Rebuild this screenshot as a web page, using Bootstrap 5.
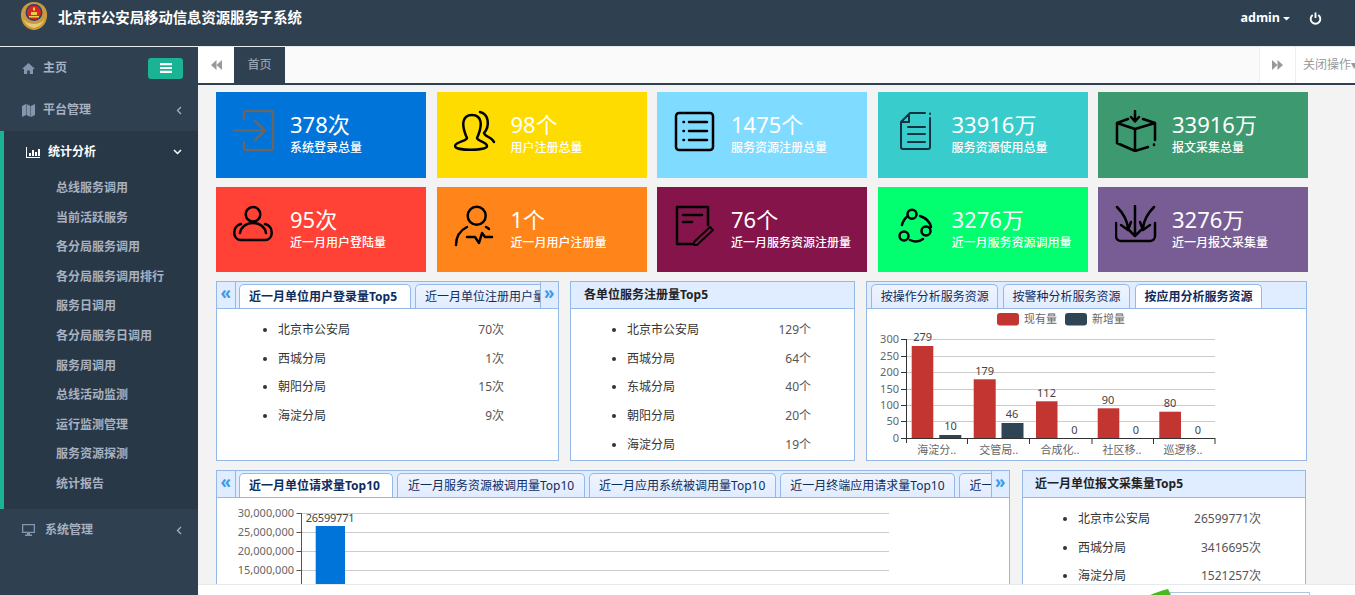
<!DOCTYPE html>
<html lang="zh">
<head>
<meta charset="utf-8">
<title>北京市公安局移动信息资源服务子系统</title>
<link href="https://cdn.jsdelivr.net/npm/bootstrap@5.3.0/dist/css/bootstrap.min.css" rel="stylesheet">
<style>
html,body{height:100%;overflow:hidden}
body{font-family:"Noto Sans","Noto Sans CJK SC",sans-serif;font-size:12px;background:#f3f3f4;color:#333}
.top-bar{height:47px;background:#2f4050;border-bottom:1px solid #e7eaec;color:#fff;flex:none;padding-bottom:10px}
.top-title{font-size:14.35px;font-weight:700;margin-left:10px}
.logo-svg{margin-left:20px;margin-top:-4px}
.admin-txt{font-size:12.5px;font-weight:700;line-height:1;margin-top:1px}
.caret-svg{margin-left:3px}
.power-svg{margin-left:18px;margin-right:33px}
.side-bar{width:198px;flex:none;background:#2f4050;color:#a7b1c2;font-weight:600}
.side-item{height:42px;position:relative}
.side-home{padding-left:22px}
.side-label{margin-left:8px}
.side-label-wide{margin-left:10px}
.menu-btn{width:35px;height:21px;background:#1ab394;border-radius:3px;margin-left:auto;margin-right:15px}
.side-active{background:#293846;border-left:4px solid #1ab394;height:378px}
.side-active .side-item{color:#fff;padding-left:22px}
.side-sub{padding-left:52px}
.side-sub div{height:29.6px;line-height:29.6px}
.side-arrow{margin-left:auto;margin-right:16px}
.main-col{min-width:0}
.split-area{min-height:0}
.tab-bar{height:38px;flex:none;background:#fafafa;border-bottom:2px solid #2f4050;color:#999}
.tab-btn{width:36px;background:#fff;flex:none}
.tab-home{width:51px;background:#2f4050;color:#a7b1c2;flex:none}
.tab-right{width:36px;background:#fff;border-left:1px solid #eee;flex:none}
.tab-close{width:60px;padding-left:7px;background:#fff;border-left:1px solid #eee;white-space:nowrap;overflow:hidden;flex:none}
.content-area{min-height:0;overflow:hidden;padding:7px 0 0 18px}
.tile-grid{display:grid;grid-template-columns:repeat(5,210px);column-gap:10.5px;row-gap:9px;grid-template-rows:86px 85px}
.tile{padding:18px 0 0 17px;color:#fff;gap:15px}
.tile svg{flex:none;fill:none;stroke:#000;stroke-width:2.5;stroke-linecap:round;stroke-linejoin:round}
.tile svg.ic-gray{stroke:#666}
.tile svg.ic-doc{stroke:#12333f;stroke-width:2}
.tile-num{font-size:22px;line-height:29px}
.tile-sub{font-size:12px;line-height:15px;font-weight:500;margin-top:1px}
.c1{background:#0074d9}.c2{background:#ffdc00}.c3{background:#7fdbff}.c4{background:#39cccc}.c5{background:#3d9970}
.c6{background:#ff4136}.c7{background:#ff851b}.c8{background:#85144b}.c9{background:#01ff70}.c10{background:#775d94}
.pn-row{margin-top:9px;gap:11px;height:180px}
.pn-row2{margin-top:9px;gap:12px;height:200px}
.pn{border:1px solid #95b8e7;background:#fff;overflow:hidden;flex:none}
.w1{width:343px}.w2{width:285px}.w3{width:441px}.w4{width:794px}.w5{width:284px}
.pn-head{height:26px;background:#e0ecff;border-bottom:1px solid #95b8e7;box-sizing:content-box;position:relative}
.pn-title{font-weight:700;color:#222;padding-left:13px;line-height:26px}
.pn-title5{padding-left:12px}
.scroller{width:18.5px;flex:none;background:#e0ecff;color:#3d9be9;font-size:17px;line-height:21px;text-align:center;height:26px;font-weight:700}
.scroller-l{border-right:1px solid #95b8e7}
.scroller-r{border-left:1px solid #95b8e7}
.tab-strip{min-width:0;overflow:hidden;gap:4px;padding:2px 0 0 3px}
.tab-strip-plain{padding-left:4px;gap:4.5px}
.easy-tab{height:24px;line-height:23px;padding:0 9.5px;border:1px solid #95b8e7;border-bottom:0;border-radius:5px 5px 0 0;background:linear-gradient(#eff5ff,#e0ecff);color:#0e2d5f;white-space:nowrap;flex:none}
.easy-tab-on{background:#fff;font-weight:700;height:25px;position:relative;z-index:1;padding:0 12.5px 0 9.5px}
.w3 .easy-tab{padding:0 8.7px}
.rank-list{margin:0;padding:7px 54px 0 61px;line-height:28.7px;color:#333}
.rank-list span:last-child{color:#555}
.rank-two{padding:7px 43px 0 56px}
.rank-five{padding:7px 44px 0 55px}
.foot-bar{height:11px;flex:none;background:#fff;border-top:1px solid #e7eaec;overflow:hidden;padding-right:45px}
.foot-box{width:140px;height:20px;margin-top:7px;border:1px solid #b0c4de;background:#fff}
.foot-mark{margin-top:4px}
.chart-svg{display:block}
.chart-svg text{font-family:"Noto Sans","Noto Sans CJK SC",sans-serif;font-size:11px;fill:#666}
.chart-svg .val{fill:#444;text-anchor:middle}
.chart-svg .axl{text-anchor:end}
.chart-svg .cat{text-anchor:middle}
.chart-svg .tight{letter-spacing:-.2px}
</style>
</head>
<body class="d-flex flex-column">
<header class="top-bar d-flex align-items-center">
  <svg class="logo-svg" width="28" height="30" viewBox="0 0 28 30">
    <path d="M14 1C5 1 0 8 1 16c1 8 7 13 13 13s12-5 13-13C28 8 23 1 14 1z" fill="#c99a3c"/>
    <path d="M3 17c2 6 6 9 11 10 5-1 9-4 11-10-1 3-6 6-11 6S4 20 3 17z" fill="#e8c976"/>
    <circle cx="14" cy="11.500" r="8.500" fill="#2a3f78"/>
    <circle cx="14" cy="11.500" r="7" fill="#d62a20"/>
    <path d="M9 15h10v1.500H9zM11 11h6v3h-6zM13 6.500h2v3h-2z" fill="#f3c94e"/>
  </svg>
  <span class="top-title">北京市公安局移动信息资源服务子系统</span>
  <span class="admin-txt ms-auto">admin</span>
  <svg class="caret-svg" width="8" height="5" viewBox="0 0 8 5"><path d="M0 1h7L3.500 4.500z" fill="#fff"/></svg>
  <svg class="power-svg" width="13" height="13" viewBox="0 0 14 14" fill="none" stroke="#fff" stroke-width="2"><path d="M4 3.200a5.200 5.200 0 1 0 6 0"/><path d="M7 .500v6"/></svg>
</header>
<div class="split-area d-flex flex-grow-1">
  <aside class="side-bar">
    <div class="side-item side-home d-flex align-items-center">
      <svg width="13" height="11" viewBox="0 0 13 11"><path d="M6.500 0L0 6h2v5h3.200V7.500h2.600V11H11V6h2z" fill="#8496ad"/></svg>
      <span class="side-label">主页</span>
      <span class="menu-btn d-flex flex-column align-items-center justify-content-center"><svg width="12" height="10" viewBox="0 0 12 10"><path d="M0 0h12v2.200H0zM0 3.900h12v2.200H0zM0 7.800h12V10H0z" fill="#fff"/></svg></span>
    </div>
    <div class="side-item side-home d-flex align-items-center">
      <svg width="13" height="13" viewBox="0 0 13 13"><path d="M0 2l4-2v11l-4 2zM4.500 0l4 2v11l-4-2zM9 2l4-2v11l-4 2z" fill="#8496ad"/></svg>
      <span class="side-label">平台管理</span>
      <svg class="side-arrow" width="6" height="9" viewBox="0 0 6 9" fill="none" stroke="#a7b1c2" stroke-width="1.300"><path d="M5 1L1.500 4.500 5 8"/></svg>
    </div>
    <div class="side-active">
      <div class="side-item d-flex align-items-center">
        <svg width="14" height="11" viewBox="0 0 14 11"><path d="M0 0h1v10h13v1H0zM3 6h2v3H3zM6 3h2v6H6zM9 5h2v4H9zM12 2h2v7h-2z" fill="#fff"/></svg>
        <span class="side-label fw-bold">统计分析</span>
        <svg class="side-arrow" width="9" height="6" viewBox="0 0 9 6" fill="none" stroke="#fff" stroke-width="1.500"><path d="M1 1l3.500 3.500L8 1"/></svg>
      </div>
      <div class="side-sub">
        <div>总线服务调用</div><div>当前活跃服务</div><div>各分局服务调用</div><div>各分局服务调用排行</div><div>服务日调用</div><div>各分局服务日调用</div><div>服务周调用</div><div>总线活动监测</div><div>运行监测管理</div><div>服务资源探测</div><div>统计报告</div>
      </div>
    </div>
    <div class="side-item side-home d-flex align-items-center">
      <svg width="13" height="12" viewBox="0 0 13 12"><path d="M0 0h13v9H8v1.500h2V12H3v-1.500h2V9H0zM1.300 1.300v6.400h10.400V1.300z" fill="#8496ad"/></svg>
      <span class="side-label side-label-wide">系统管理</span>
      <svg class="side-arrow" width="6" height="9" viewBox="0 0 6 9" fill="none" stroke="#a7b1c2" stroke-width="1.300"><path d="M5 1L1.500 4.500 5 8"/></svg>
    </div>
  </aside>
  <main class="main-col flex-grow-1 d-flex flex-column">
    <div class="tab-bar d-flex">
      <div class="tab-btn d-flex align-items-center justify-content-center"><svg width="11" height="10" viewBox="0 0 11 10"><path d="M5.500 0v10L0 5zM11 0v10L5.500 5z" fill="#999"/></svg></div>
      <div class="tab-home d-flex align-items-center justify-content-center">首页</div>
      <div class="flex-grow-1"></div>
      <div class="tab-right d-flex align-items-center justify-content-center"><svg width="11" height="10" viewBox="0 0 11 10"><path d="M0 0v10l5.500-5zM5.500 0v10L11 5z" fill="#999"/></svg></div>
      <div class="tab-close d-flex align-items-center">关闭操作▾</div>
    </div>
    <div class="content-area flex-grow-1">
      <div class="tile-grid">
        <div class="tile c1 d-flex">
          <svg class="ic-gray" width="42" height="42" viewBox="0 0 42 42"><path d="M11 9V3a2 2 0 0 1 2-2h25a2 2 0 0 1 2 2v35a2 2 0 0 1-2 2H13a2 2 0 0 1-2-2v-6"/><path d="M1 20.500h31M22 11l10 9.500L22 30"/></svg>
          <div><div class="tile-num">378次</div><div class="tile-sub">系统登录总量</div></div>
        </div>
        <div class="tile c2 d-flex">
          <svg width="42" height="42" viewBox="0 0 42 42"><path d="M13 28C7 15 8 5 18 5c10 0 11 10 5 23 0 3 10 4 10 8 0 5-32 5-32 0 0-4 12-5 12-8z"/><path d="M26 2c9 2 10 14 4 21 1 4 8 4 10 9"/></svg>
          <div><div class="tile-num">98个</div><div class="tile-sub">用户注册总量</div></div>
        </div>
        <div class="tile c3 d-flex">
          <svg width="42" height="42" viewBox="0 0 42 42"><rect x="2" y="3" width="37" height="37" rx="3"/><path d="M15 12h18M15 21h18M15 30h18M9.500 12h.5M9.500 21h.5M9.500 30h.5"/></svg>
          <div><div class="tile-num">1475个</div><div class="tile-sub">服务资源注册总量</div></div>
        </div>
        <div class="tile c4 d-flex">
          <svg class="ic-doc" width="42" height="42" viewBox="0 0 42 42"><path d="M6 12l9-9h15M35 8v29a2 2 0 0 1-2 2H8a2 2 0 0 1-2-2V12M14 4v8H6M35 3.500v.5M13 17h17M13 24h17M13 32h17"/></svg>
          <div><div class="tile-num">33916万</div><div class="tile-sub">服务资源使用总量</div></div>
        </div>
        <div class="tile c5 d-flex">
          <svg width="42" height="42" viewBox="0 0 42 42"><path d="M20 1v10M16 7l4 4.500L24 7M13 9L2 13v20l18 8 13-4M28 9l12 4v17M2 13l18 6 20-6M20 19v22M39 34.500v.5"/></svg>
          <div><div class="tile-num">33916万</div><div class="tile-sub">报文采集总量</div></div>
        </div>
        <div class="tile c6 d-flex">
          <svg width="42" height="42" viewBox="0 0 42 42"><circle cx="20" cy="9.300" r="7.300"/><path d="M7 28c1-6 6-10 13-10s12 4 13 10M8 19c-9 2-9 16 0 16h24c9 0 9-14 0-16"/></svg>
          <div><div class="tile-num">95次</div><div class="tile-sub">近一月用户登陆量</div></div>
        </div>
        <div class="tile c7 d-flex">
          <svg width="42" height="42" viewBox="0 0 42 42"><circle cx="22.700" cy="10.700" r="9"/><path d="M2 40c0-9 5-15 11-18M32 22c1 .5 2 1 3 2M13 32h8l4 6 3-10 3 4h7"/></svg>
          <div><div class="tile-num">1个</div><div class="tile-sub">近一月用户注册量</div></div>
        </div>
        <div class="tile c8 d-flex">
          <svg width="42" height="42" viewBox="0 0 42 42"><path d="M34 20V2H3v37h15M9 10h19M9 17h9"/><path d="M20 37l16-15 3 3-16 15h-3z" stroke-width="1.800"/></svg>
          <div><div class="tile-num">76个</div><div class="tile-sub">近一月服务资源注册量</div></div>
        </div>
        <div class="tile c9 d-flex">
          <svg width="42" height="42" viewBox="0 0 42 42"><circle cx="17" cy="9.300" r="4.500"/><circle cx="31" cy="26" r="4.500"/><circle cx="9" cy="31" r="4.500"/><path d="M7 20c1-4 3-7 6-9M25 11c6 2 10 6 11 11M15 35c4 2 9 2 13-1"/></svg>
          <div><div class="tile-num">3276万</div><div class="tile-sub">近一月服务资源调用量</div></div>
        </div>
        <div class="tile c10 d-flex">
          <svg width="42" height="42" viewBox="0 0 42 42"><path d="M1 18v13a5 5 0 0 0 5 5h29a5 5 0 0 0 5-5V18M20 1v29M14 25l6 6 6-6M2 2c5 5 10 12 11 21M6 20l7 5 3-8M39 2c-5 5-10 12-11 21M35 20l-7 5-3-8"/></svg>
          <div><div class="tile-num">3276万</div><div class="tile-sub">近一月报文采集量</div></div>
        </div>
      </div>

      <div class="pn-row d-flex">
        <section class="pn w1">
          <div class="pn-head d-flex">
            <div class="scroller scroller-l">«</div>
            <div class="tab-strip flex-grow-1 d-flex">
              <div class="easy-tab easy-tab-on">近一月单位用户登录量Top5</div>
              <div class="easy-tab">近一月单位注册用户量Top5</div>
            </div>
            <div class="scroller scroller-r">»</div>
          </div>
          <ul class="rank-list">
            <li><div class="d-flex justify-content-between"><span>北京市公安局</span><span>70次</span></div></li>
            <li><div class="d-flex justify-content-between"><span>西城分局</span><span>1次</span></div></li>
            <li><div class="d-flex justify-content-between"><span>朝阳分局</span><span>15次</span></div></li>
            <li><div class="d-flex justify-content-between"><span>海淀分局</span><span>9次</span></div></li>
          </ul>
        </section>
        <section class="pn w2">
          <div class="pn-head"><div class="pn-title">各单位服务注册量Top5</div></div>
          <ul class="rank-list rank-two">
            <li><div class="d-flex justify-content-between"><span>北京市公安局</span><span>129个</span></div></li>
            <li><div class="d-flex justify-content-between"><span>西城分局</span><span>64个</span></div></li>
            <li><div class="d-flex justify-content-between"><span>东城分局</span><span>40个</span></div></li>
            <li><div class="d-flex justify-content-between"><span>朝阳分局</span><span>20个</span></div></li>
            <li><div class="d-flex justify-content-between"><span>海淀分局</span><span>19个</span></div></li>
          </ul>
        </section>
        <section class="pn w3">
          <div class="pn-head d-flex">
            <div class="tab-strip tab-strip-plain flex-grow-1 d-flex">
              <div class="easy-tab">按操作分析服务资源</div>
              <div class="easy-tab">按警种分析服务资源</div>
              <div class="easy-tab easy-tab-on">按应用分析服务资源</div>
            </div>
          </div>
          <svg class="chart-svg" width="439" height="152" viewBox="867 308 439 152">
            <rect x="997" y="312" width="22" height="12.500" rx="3" fill="#c23531"/>
            <text x="1024" y="322">现有量</text>
            <rect x="1065" y="312" width="22" height="12.500" rx="3" fill="#2f4554"/>
            <text x="1092" y="322">新增量</text>
            <path d="M906 338.500H1215M906 355.500H1215M906 371.500H1215M906 388.500H1215M906 404.500H1215M906 420.500H1215" stroke="#ccc"/>
            <g fill="#c23531">
              <rect x="911.700" y="345" width="21.600" height="92.700"/>
              <rect x="973.700" y="378.300" width="22" height="59.400"/>
              <rect x="1036" y="400.300" width="21.500" height="37.400"/>
              <rect x="1097.700" y="407.300" width="21.600" height="30.400"/>
              <rect x="1159.300" y="410.700" width="21.700" height="27"/>
            </g>
            <g fill="#2f4554">
              <rect x="939.300" y="434" width="22" height="3.700"/>
              <rect x="1001.500" y="422" width="22" height="15.700"/>
            </g>
            <path d="M906.500 338v104M901 338.500h5M901 355.500h5M901 371.500h5M901 388.500h5M901 404.500h5M901 420.500h5M901 437.500H1215.500M967.500 438v5M1029.500 438v5M1092 438v5M1153.500 438v5M1215 438v5" stroke="#333" fill="none"/>
            <text class="axl" x="899" y="342">300</text><text class="axl" x="899" y="359">250</text><text class="axl" x="899" y="375">200</text><text class="axl" x="899" y="392">150</text><text class="axl" x="899" y="408">100</text><text class="axl" x="899" y="424">50</text><text class="axl" x="899" y="441">0</text>
            <text class="val" x="922.700" y="340">279</text><text class="val" x="950.500" y="429">10</text>
            <text class="val" x="984.700" y="374">179</text><text class="val" x="1012" y="417">46</text>
            <text class="val" x="1046.500" y="396">112</text><text class="val" x="1074.500" y="433">0</text>
            <text class="val" x="1108" y="403">90</text><text class="val" x="1136" y="433">0</text>
            <text class="val" x="1170" y="406">80</text><text class="val" x="1198" y="433">0</text>
            <text class="cat" x="936.700" y="453">海淀分..</text><text class="cat" x="998.700" y="453">交管局..</text><text class="cat" x="1060" y="453">合成化..</text><text class="cat" x="1122" y="453">社区移..</text><text class="cat" x="1183" y="453">巡逻移..</text>
          </svg>
        </section>
      </div>

      <div class="pn-row2 d-flex">
        <section class="pn w4">
          <div class="pn-head d-flex">
            <div class="scroller scroller-l">«</div>
            <div class="tab-strip flex-grow-1 d-flex">
              <div class="easy-tab easy-tab-on">近一月单位请求量Top10</div>
              <div class="easy-tab">近一月服务资源被调用量Top10</div>
              <div class="easy-tab">近一月应用系统被调用量Top10</div>
              <div class="easy-tab">近一月终端应用请求量Top10</div>
              <div class="easy-tab">近一月终端应用请求量Top10</div>
            </div>
            <div class="scroller scroller-r">»</div>
          </div>
          <svg class="chart-svg" width="792" height="100" viewBox="217 497 792 100">
            <path d="M301 512.500H889M301 531.500H889M301 550.500H889M301 569.500H889M301 588.500H889" stroke="#ccc"/>
            <rect x="315.700" y="525" width="29.300" height="75" fill="#0074d9"/>
            <path d="M301.500 512v90M296.500 512.500h5M296.500 531.500h5M296.500 550.500h5M296.500 569.500h5M296.500 588.500h5" stroke="#555" fill="none"/>
            <text class="axl" x="294" y="516">30,000,000</text><text class="axl" x="294" y="535">25,000,000</text><text class="axl" x="294" y="554">20,000,000</text><text class="axl" x="294" y="573">15,000,000</text><text class="axl" x="294" y="592">10,000,000</text>
            <text class="val tight" x="330" y="521">26599771</text>
          </svg>
        </section>
        <section class="pn w5">
          <div class="pn-head"><div class="pn-title pn-title5">近一月单位报文采集量Top5</div></div>
          <ul class="rank-list rank-five">
            <li><div class="d-flex justify-content-between"><span>北京市公安局</span><span>26599771次</span></div></li>
            <li><div class="d-flex justify-content-between"><span>西城分局</span><span>3416695次</span></div></li>
            <li><div class="d-flex justify-content-between"><span>海淀分局</span><span>1521257次</span></div></li>
          </ul>
        </section>
      </div>
    </div>
    <footer class="foot-bar d-flex justify-content-end">
      <svg class="foot-mark" width="24" height="8" viewBox="0 0 24 8"><path d="M0 8C6 5 14 2 22 0l2 4v4z" fill="#46b91e"/></svg>
      <div class="foot-box"></div>
    </footer>
  </main>
</div>
<script src="https://cdn.jsdelivr.net/npm/bootstrap@5.3.0/dist/js/bootstrap.bundle.min.js"></script>
</body>
</html>
